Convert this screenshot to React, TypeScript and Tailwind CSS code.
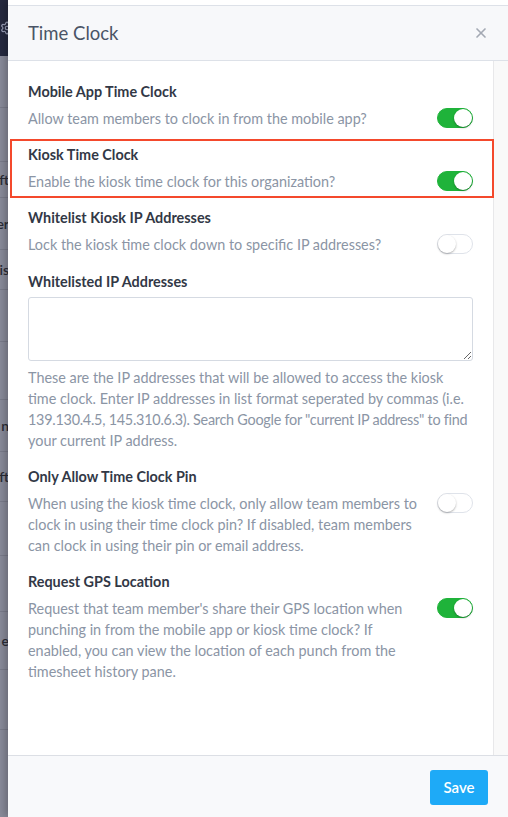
import { Settings, X } from 'lucide-react';

const font = { fontFamily: 'Lato, "Open Sans", Arial, sans-serif' };

const Toggle = ({ on }: { on: boolean }) => (
  <div
    className={`relative h-[20px] w-[36px] shrink-0 rounded-full border ${
      on ? 'border-[#1fb33a] bg-[#1fb33a]' : 'border-[#dfe3ea] bg-white'
    }`}
  >
    <div
      className={`absolute top-[0px] h-[18px] w-[18px] rounded-full bg-white shadow-[0_1px_2px_rgba(0,0,0,0.3)] ${
        on ? 'right-[0px]' : 'left-[0px]'
      }`}
    />
  </div>
);

interface SettingRowProps {
  label: string;
  description: string;
  on: boolean;
  highlight?: boolean;
}

const SettingRow = ({ label, description, on, highlight }: SettingRowProps) => (
  <div className="relative">
    {/* Annotation box drawn over the row */}
    {highlight && (
      <div className="pointer-events-none absolute -top-[6px] -bottom-[6px] -left-[18px] -right-[21px] border-2 border-[#f4492c]" />
    )}
    <div className="text-[14.4px] font-bold leading-[20px] text-[#323846]">{label}</div>
    <div className="mt-[6px] flex items-start justify-between">
      <p className="w-[393px] text-[14.4px] leading-[21px] text-[#8b95a5]">{description}</p>
      <Toggle on={on} />
    </div>
  </div>
);

// Edge of the page that sits behind the drawer
const BackdropStrip = () => {
  const rows: { h: number; text?: string }[] = [
    { h: 52 },
    { h: 54 },
    { h: 36, text: 'ft' },
    { h: 52, text: 'er' },
    { h: 40, text: 'is' },
    { h: 52 },
    { h: 58 },
    { h: 52, text: 'n' },
    { h: 50, text: 'ft' },
    { h: 54 },
    { h: 56 },
    { h: 58, text: 'e' },
    { h: 60 },
  ];
  return (
    <div className="flex w-[8px] shrink-0 flex-col overflow-hidden bg-[#8a8c9b]" style={font}>
      <div className="flex h-[56px] shrink-0 items-center justify-end bg-[#262a40]">
        <Settings className="-mr-[6px] h-[14px] w-[14px] shrink-0 text-[#9aa0b8]" />
      </div>
      {rows.map((r, i) => (
        <div
          key={i}
          className="flex shrink-0 items-center justify-end border-b border-[#7b7d8c] text-[14px] font-semibold text-[#2a2c36]"
          style={{ height: r.h }}
        >
          {r.text && <span className="-mr-[1px] whitespace-nowrap">{r.text}</span>}
        </div>
      ))}
    </div>
  );
};

export default function App() {
  return (
    <div className="flex h-[817px] w-[508px] overflow-hidden bg-white" style={font}>
      <BackdropStrip />

      <div className="relative flex flex-1 flex-col shadow-[-3px_0_8px_rgba(0,0,0,0.25)]">
        <div className="h-[5px] shrink-0 bg-white" />

        {/* Header */}
        <div className="flex h-[56px] shrink-0 items-center justify-between border-y border-[#dde1e8] bg-[#f7f8fa] pl-5 pr-[19px]">
          <h2 className="text-[18.5px] leading-none text-[#4a5466]">Time Clock</h2>
          <X className="h-[16px] w-[16px] text-[#a3a9b3]" strokeWidth={2.5} />
        </div>

        {/* Body */}
        <div className="flex flex-1">
          <div className="flex flex-1 flex-col gap-[16px] px-5 pt-[21px]">
            <SettingRow
              label="Mobile App Time Clock"
              description="Allow team members to clock in from the mobile app?"
              on
            />
            <SettingRow
              label="Kiosk Time Clock"
              description="Enable the kiosk time clock for this organization?"
              on
              highlight
            />
            <SettingRow
              label="Whitelist Kiosk IP Addresses"
              description="Lock the kiosk time clock down to specific IP addresses?"
              on={false}
            />

            <div className="mt-[1px]">
              <div className="text-[14.4px] font-bold leading-[20px] text-[#323846]">Whitelisted IP Addresses</div>
              <textarea className="mt-[5px] block h-[64px] w-full rounded-[3px] border border-[#d5dae2] bg-white" />
              <p className="mt-[6px] text-[14.4px] leading-[21px] text-[#8b95a5]">
                <span className="block whitespace-nowrap">
                  These are the IP addresses that will be allowed to access the kiosk
                </span>
                <span className="block whitespace-nowrap">
                  time clock. Enter IP addresses in list format seperated by commas (i.e.
                </span>
                <span className="block whitespace-nowrap tracking-[-0.25px]">
                  139.130.4.5, 145.310.6.3). Search Google for "current IP address" to find
                </span>
                <span className="block whitespace-nowrap">your current IP address.</span>
              </p>
            </div>

            <SettingRow
              label="Only Allow Time Clock Pin"
              description="When using the kiosk time clock, only allow team members to clock in using their time clock pin? If disabled, team members can clock in using their pin or email address."
              on={false}
            />
            <SettingRow
              label="Request GPS Location"
              description="Request that team member's share their GPS location when punching in from the mobile app or kiosk time clock? If enabled, you can view the location of each punch from the timesheet history pane."
              on
            />
          </div>
          {/* Scrollbar track */}
          <div className="w-[15px] shrink-0 border-l border-[#e8e8ea] bg-[#f9f9f9]" />
        </div>

        {/* Footer */}
        <div className="flex h-[62px] shrink-0 items-start justify-end border-t border-[#dcdfe5] bg-[#f8f9fb] pt-[14px] pr-5">
          <button
            type="button"
            className="h-[35px] w-[58px] rounded-[3px] bg-[#1eaaf7] text-[15px] font-semibold text-white"
          >
            Save
          </button>
        </div>
      </div>
    </div>
  );
}
